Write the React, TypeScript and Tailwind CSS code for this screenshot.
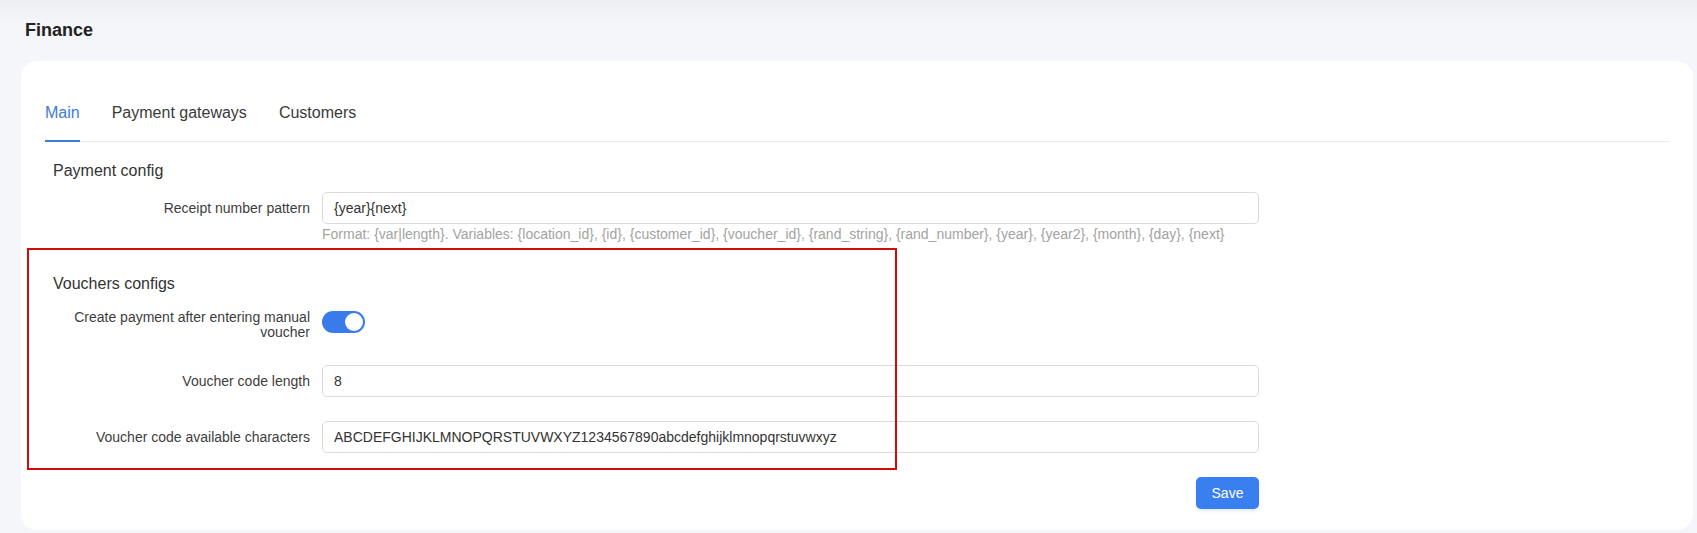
import React from "react";

type RowProps = {
  label: string;
  value: string;
};

const InputRow: React.FC<RowProps> = ({ label, value }) => {
  return (
    <div className="flex items-center gap-3">
      <label className="w-[257px] shrink-0 text-right text-sm leading-[15px] text-[#3d3d3d]">
        {label}
      </label>
      <input
        className="h-[32px] w-[937px] rounded-[5px] border border-[#dadada] bg-white px-[11px] text-sm text-[#333] outline-none"
        defaultValue={value}
      />
    </div>
  );
};

const App: React.FC = () => {
  const tabs = ["Main", "Payment gateways", "Customers"];

  return (
    <div className="h-[533px] overflow-hidden bg-[#f5f6fa] font-['Liberation_Sans',Arial,sans-serif]">
      <div className="bg-linear-to-b from-[#eceef2] to-[#f5f6fa] to-40% px-[25px] pt-[16px] pb-[17px]">
        <h1 className="text-lg leading-7 font-bold text-[#222]">Finance</h1>
      </div>

      <div className="relative ml-[21px] mr-[4px] rounded-2xl bg-white px-6 pt-10 pb-[21px]">
        <div className="flex gap-8 border-b border-[#e9e9ec]">
          {tabs.map((tab, i) => (
            <div
              key={tab}
              className={
                i === 0
                  ? "-mb-px border-b-2 border-[#3b7ddd] pb-[15px] text-base leading-6 text-[#3b7ddd]"
                  : "-mb-px border-b-2 border-transparent pb-[15px] text-base leading-6 text-[#3a3a3a]"
              }
            >
              {tab}
            </div>
          ))}
        </div>

        <div className="pl-2">
          <h3 className="mt-[17px] text-base leading-6 text-[#333]">Payment config</h3>
          <div className="mt-[9px]">
            <InputRow label="Receipt number pattern" value="{year}{next}" />
            <p className="ml-[269px] text-sm leading-5 text-[#a3a3a3]">
              Format: {"{var|length}"}. Variables: {"{location_id}"}, {"{id}"}, {"{customer_id}"},{" "}
              {"{voucher_id}"}, {"{rand_string}"}, {"{rand_number}"}, {"{year}"}, {"{year2}"},{" "}
              {"{month}"}, {"{day}"}, {"{next}"}
            </p>
          </div>

          <h3 className="mt-[28px] text-base leading-6 text-[#333]">Vouchers configs</h3>
          <div className="mt-[14px] flex items-start gap-3">
            <label className="w-[257px] shrink-0 text-right text-sm leading-[15px] text-[#3d3d3d]">
              Create payment after entering manual voucher
            </label>
            <button className="mt-px flex h-[22px] w-[43px] items-center justify-end rounded-full bg-[#3a7bec] px-[2px]">
              <span className="h-[18px] w-[18px] rounded-full bg-white" />
            </button>
          </div>

          <div className="mt-[25px]">
            <InputRow label="Voucher code length" value="8" />
          </div>
          <div className="mt-6">
            <InputRow
              label="Voucher code available characters"
              value="ABCDEFGHIJKLMNOPQRSTUVWXYZ1234567890abcdefghijklmnopqrstuvwxyz"
            />
          </div>

          <div className="mt-6 flex w-[1206px] justify-end">
            <button className="h-[32px] w-[63px] rounded-[5px] bg-[#3a7ff0] text-sm text-white shadow-[0_2px_3px_rgba(59,130,246,0.15)]">
              Save
            </button>
          </div>
        </div>

        <div className="pointer-events-none absolute top-[187px] left-[6px] h-[222px] w-[870px] border-2 border-[#d20a0a]" />
      </div>
    </div>
  );
};

export default App;
